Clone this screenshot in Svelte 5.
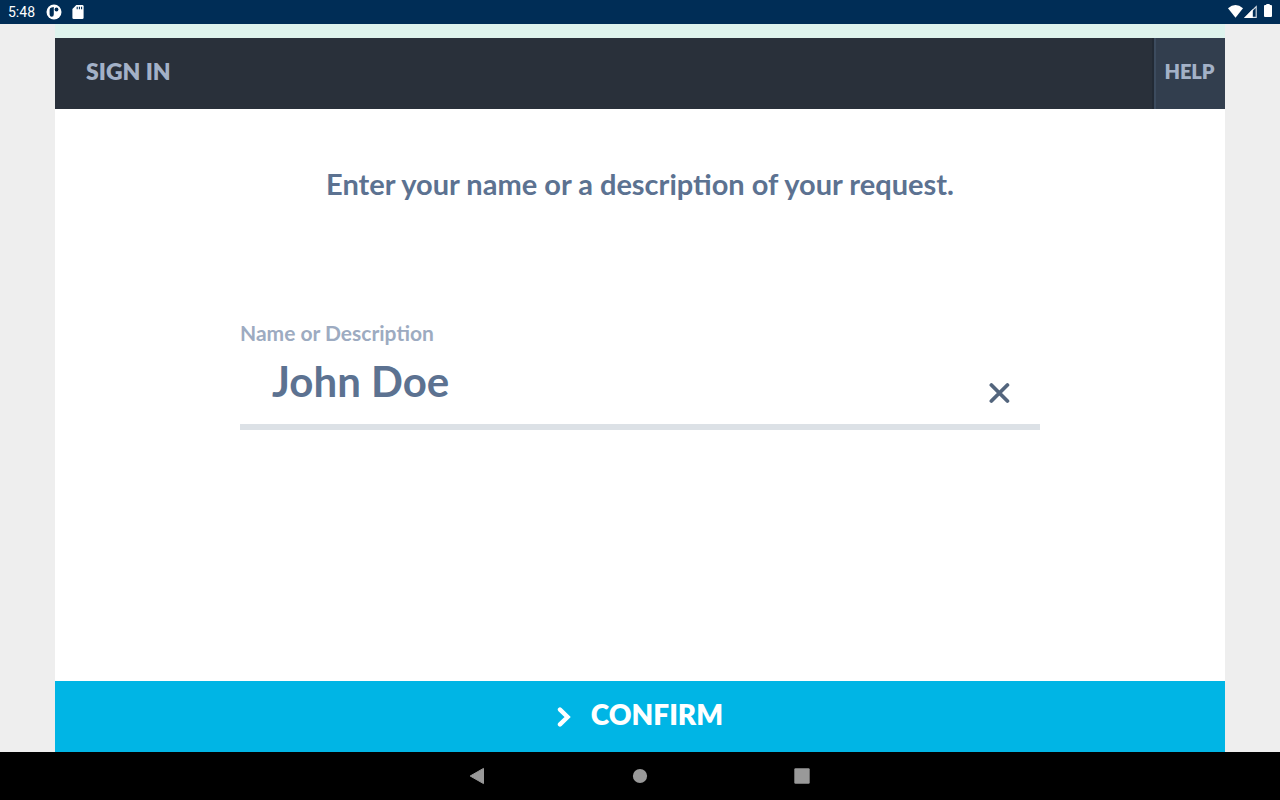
<script>
    let name = "John Doe";

    function clearName() {
        name = "";
    }
</script>

<div class="screen">
    <div class="status-bar">
        <span class="time">5:48</span>
        <svg class="app-icon" width="16" height="16" viewBox="0 0 16 16">
            <circle cx="8" cy="8" r="7.5" fill="#fff" />
            <path
                d="M7.8 3V10.2Q7.8 12.8 5.7 12.8Q3.8 12.8 3.6 10.5V5.8Q3.6 3.6 5.6 3.4Z"
                fill="#002d56"
            />
            <circle cx="10.5" cy="5.5" r="1.9" fill="#002d56" />
        </svg>
        <svg class="sd-icon" width="12" height="14" viewBox="0 0 12 14">
            <path
                d="M4.3 0H10.3Q11.6 0 11.6 1.3V12.7Q11.6 14 10.3 14H1.7Q.4 14 .4 12.7V4Z"
                fill="#fff"
            />
            <path
                d="M5.2 1.8V4.2M7.4 1.8V4.2M9.6 1.8V4.2"
                stroke="#002d56"
                stroke-width="1.1"
            />
        </svg>
        <div class="status-right">
            <svg width="16" height="14" viewBox="0 0 16 14">
                <path d="M0 4.2Q7.5 -2 15 4.2L7.5 13.8Z" fill="#fff" />
            </svg>
            <svg width="13" height="14" viewBox="0 0 13 14">
                <path d="M0 14L8.8 5V14Z" fill="#fff" />
                <path
                    d="M1.4 13.4L12.2 2.6V13.4Z"
                    fill="none"
                    stroke="#fff"
                    stroke-opacity=".85"
                    stroke-width="1.1"
                />
            </svg>
            <svg class="battery" width="8" height="14" viewBox="0 0 8 14">
                <path
                    d="M2.3 0H5.7V1H7Q8 1 8 2V12Q8 13 7 13H1Q0 13 0 12V2Q0 1 1 1H2.3Z"
                    fill="#fff"
                />
            </svg>
        </div>
    </div>

    <main>
        <header>
            <h1>SIGN IN</h1>
            <button class="help" type="button">HELP</button>
        </header>

        <form on:submit|preventDefault>
            <h2>Enter your name or a description of your request.</h2>
            <div class="field">
                <label for="name">Name or Description</label>
                <div class="input-row">
                    <input
                        id="name"
                        type="text"
                        autocomplete="off"
                        spellcheck="false"
                        bind:value={name}
                    />
                    <button
                        class="clear"
                        type="button"
                        aria-label="Clear"
                        on:click={clearName}
                    >
                        <svg width="22" height="22" viewBox="0 0 22 22">
                            <path
                                d="M3.4 3L19.4 19M19.4 3L3.4 19"
                                stroke="#53657d"
                                stroke-width="3.8"
                                stroke-linecap="round"
                            />
                        </svg>
                    </button>
                </div>
            </div>
            <button class="confirm" type="submit">
                <svg width="14" height="20" viewBox="0 0 14 20">
                    <path
                        d="M3 2.6L10.6 10L3 17.4"
                        fill="none"
                        stroke="#fff"
                        stroke-width="4.4"
                        stroke-linecap="round"
                    />
                </svg>
                <span>CONFIRM</span>
            </button>
        </form>
    </main>

    <nav>
        <button type="button" aria-label="Back">
            <svg width="18" height="18" viewBox="0 0 18 18">
                <path
                    d="M14.5 1.4V16.6L1.2 9Z"
                    fill="#999"
                    stroke="#999"
                    stroke-linejoin="round"
                />
            </svg>
        </button>
        <button type="button" aria-label="Home">
            <svg width="18" height="18" viewBox="0 0 18 18">
                <circle cx="9" cy="9" r="7.1" fill="#999" />
            </svg>
        </button>
        <button type="button" aria-label="Recent apps">
            <svg width="18" height="18" viewBox="0 0 18 18">
                <rect x="1.3" y="1.3" width="15.4" height="15.4" rx="1.2" fill="#999" />
            </svg>
        </button>
    </nav>
</div>

<style>
    :global(body) {
        margin: 0;
        background-color: #eee;
        font-family: Lato, sans-serif;
    }

    svg {
        display: block;
    }

    button {
        margin: 0;
        padding: 0;
        border: none;
        background: none;
        font-family: inherit;
        cursor: pointer;
    }

    .screen {
        display: flex;
        flex-direction: column;
        min-height: 100vh;
    }

    .status-bar {
        display: flex;
        align-items: center;
        box-sizing: border-box;
        height: 24px;
        padding: 0 8px;
        background-color: #002d56;
        color: #fff;
        font-family: Roboto, sans-serif;
        font-size: 14px;
    }

    .app-icon {
        margin-left: 11px;
    }

    .sd-icon {
        margin-left: 10px;
    }

    .status-right {
        display: flex;
        height: 16px;
        margin-left: auto;
    }

    .battery {
        margin-left: 7px;
    }

    main {
        display: flex;
        flex: 1;
        flex-direction: column;
        box-sizing: border-box;
        width: 100%;
        max-width: 1170px;
        margin: 0 auto;
        padding-top: 14px;
        background-color: #def3ed;
    }

    header {
        display: flex;
        align-items: stretch;
        justify-content: space-between;
        height: 71px;
        background-color: #29303a;
        color: #a3b1c7;
    }

    h1 {
        margin: 0;
        padding-left: 31px;
        font-size: 23px;
        font-weight: 800;
        line-height: 66px;
    }

    .help {
        width: 73px;
        padding-bottom: 5px;
        border-left: 2px solid #222a35;
        box-shadow: inset 2px 0 #3c4b5e;
        background-color: #323e4e;
        color: #a3b1c7;
        font-size: 20px;
        font-weight: 800;
    }

    form {
        display: flex;
        flex: 1;
        flex-direction: column;
        background-color: #fff;
    }

    h2 {
        margin: 55px 20px 0;
        color: #5c7291;
        font-size: 29px;
        font-weight: 700;
        line-height: 40px;
        text-align: center;
    }

    .field {
        box-sizing: border-box;
        width: 100%;
        max-width: 800px;
        margin: 113px auto 40px;
    }

    label {
        display: block;
        color: #9dabc1;
        font-size: 21px;
        font-weight: 700;
        line-height: 32px;
    }

    .input-row {
        display: flex;
        align-items: flex-end;
        height: 75px;
        border-bottom: 6px solid #dce1e6;
    }

    input {
        flex: 1;
        min-width: 0;
        height: 75px;
        box-sizing: border-box;
        padding: 0 32px 12px;
        border: none;
        outline: none;
        background: none;
        color: #5c7291;
        font-family: inherit;
        font-size: 42px;
        font-weight: 700;
    }

    .clear {
        padding: 20px 30px;
    }

    .confirm {
        display: flex;
        align-items: center;
        justify-content: center;
        gap: 20px;
        height: 71px;
        margin-top: auto;
        background-color: #00b5e5;
        color: #fff;
        font-size: 28px;
        font-weight: 800;
    }

    .confirm span {
        padding-bottom: 5px;
    }

    nav {
        display: flex;
        align-items: center;
        justify-content: center;
        gap: 144px;
        height: 48px;
        background-color: #000;
    }
</style>
